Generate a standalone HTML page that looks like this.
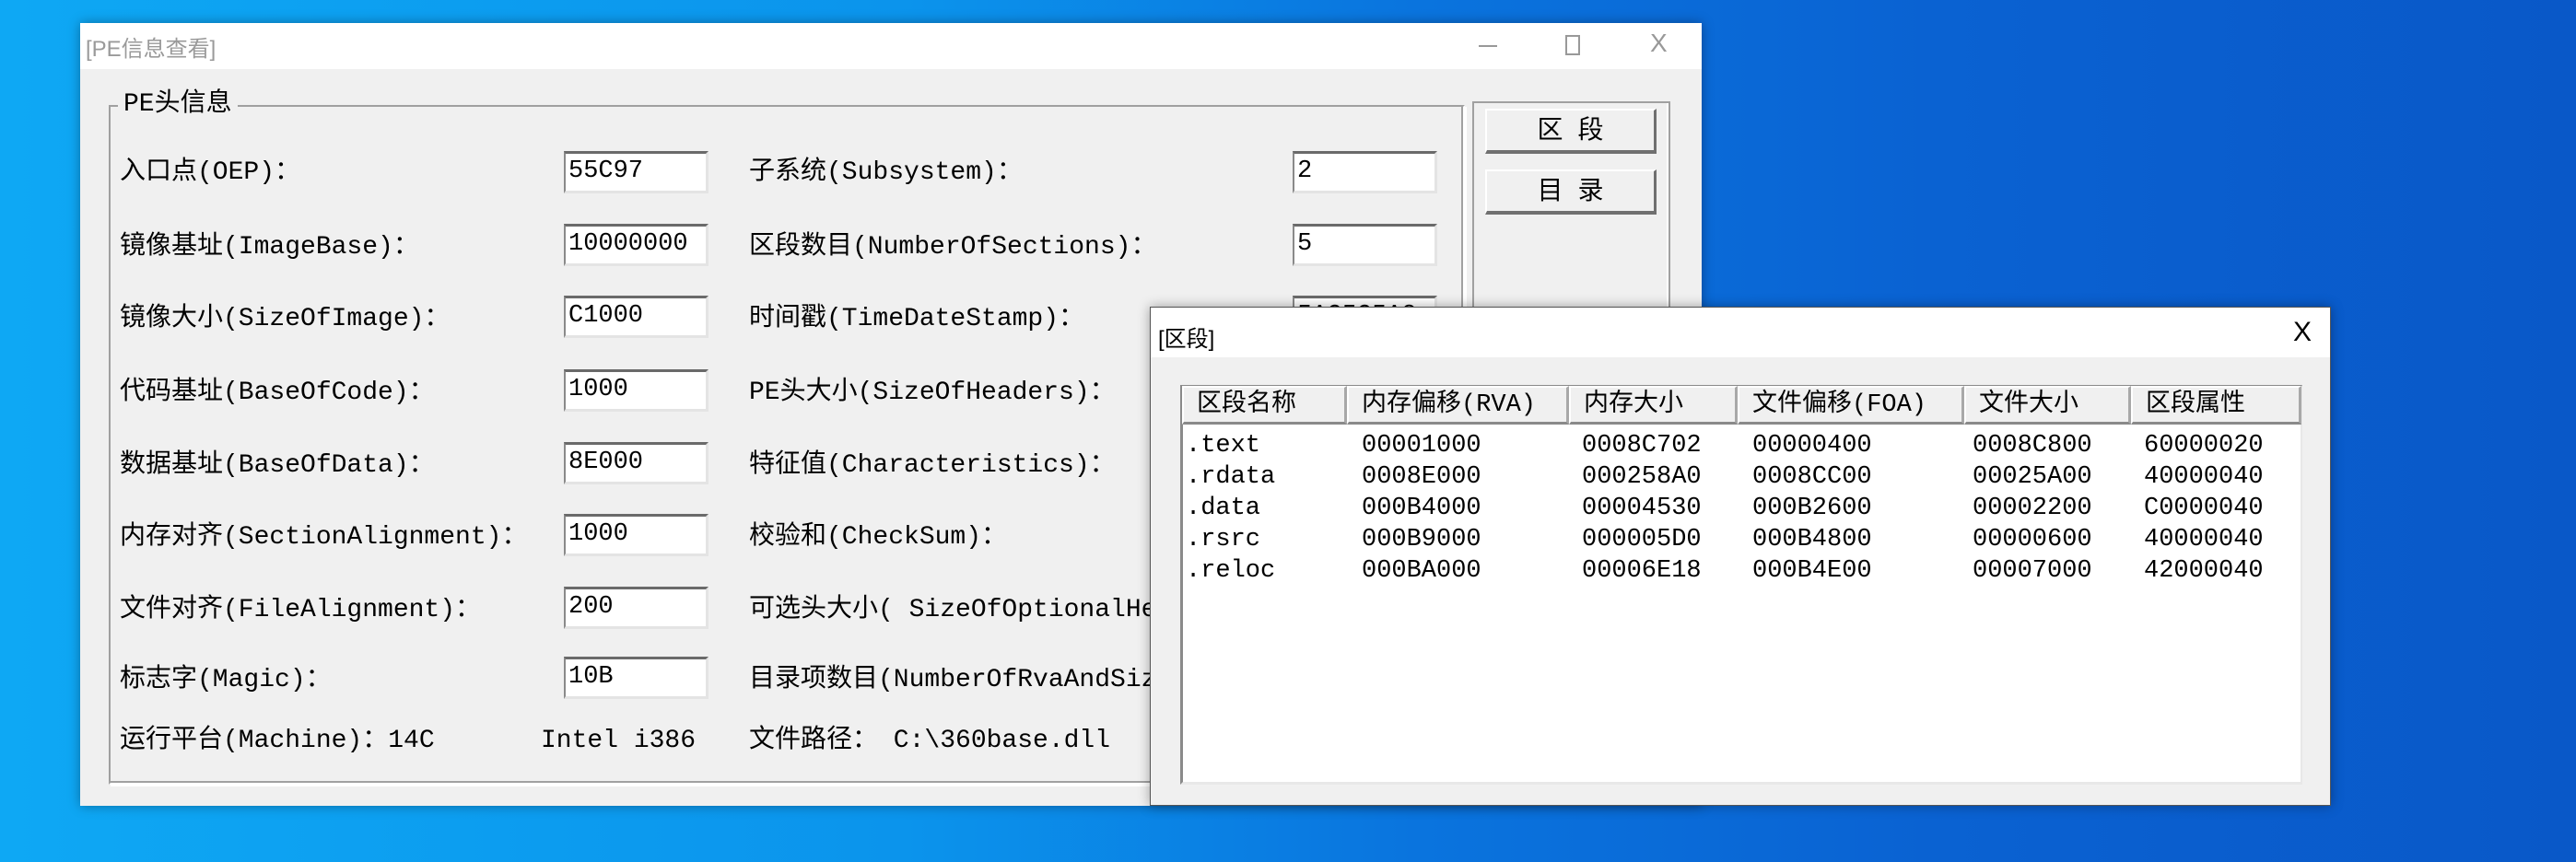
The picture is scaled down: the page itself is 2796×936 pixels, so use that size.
<!DOCTYPE html>
<html><head><meta charset="utf-8">
<style>
*{margin:0;padding:0;box-sizing:border-box}
body{width:2796px;height:936px;overflow:hidden;position:relative;
background:linear-gradient(90deg,#0ea8f4 0%,#0b94ec 35%,#0a74de 55%,#0a62d2 75%,#0958c8 100%);
font-family:"Liberation Mono","Noto Sans CJK SC",monospace;font-size:26px;color:#000}
.a{position:absolute;white-space:nowrap}
.win{position:absolute;background:#f0f0f0;box-shadow:0 0 12px rgba(0,0,0,.35)}
.tb{position:absolute;left:0;top:0;right:0;background:#fff}
.lbl{position:absolute;white-space:nowrap;line-height:30px;transform:translateY(-12px)}
.ed{position:absolute;width:157px;height:46px;background:#fff;border-top:3px solid #6a6a6a;border-left:2px solid #8a8a8a;border-right:3px solid #e4e4e4;border-bottom:3px solid #e4e4e4;padding:4px 3px 0;line-height:30px;overflow:hidden;font-size:27px}
.btn{position:absolute;left:1612px;width:186px;height:49px;background:#f0f0f0;border-top:2px solid #fff;border-left:2px solid #fff;border-right:3px solid #707070;border-bottom:4px solid #707070;text-align:center;line-height:42px;font-family:"Liberation Sans","Noto Sans CJK SC",sans-serif;font-size:28px;letter-spacing:16px;padding-left:16px}
.hd{position:absolute;top:419px;height:42px;background:#f0f0f0;border-right:3px solid #a8a8a8;border-bottom:3px solid #8a8a8a;border-top:2px solid #fff;border-left:2px solid #fff;line-height:38px;padding-left:14px;font-size:27px}
</style></head><body>

<div class="win" style="left:87px;top:25px;width:1760px;height:850px">
 <div class="tb" style="height:50px"></div>
 <div class="a" style="left:6px;top:8px;font-family:'Liberation Sans','Noto Sans CJK SC',sans-serif;font-size:24px;color:#9a9a9a">[PE信息查看]</div>
 <div class="a" style="left:1518px;top:24px;width:20px;height:2px;background:#999"></div>
 <div class="a" style="left:1612px;top:13px;width:16px;height:22px;border:2px solid #999"></div>
 <div class="a" style="left:1704px;top:6px;font-family:'Liberation Sans',sans-serif;font-size:28px;color:#999">X</div>
</div>

<div class="a" style="left:118px;top:114px;width:1472px;height:738px;border:2px solid #a0a0a0;border-right-color:#fff;border-bottom-color:#fff;box-shadow:inset -2px -2px 0 #a0a0a0, 2px 2px 0 #fff"></div>
<div class="a" style="left:128px;top:97px;background:#f0f0f0;padding:0 6px;line-height:34px;font-size:28px">PE头信息</div>

<div class="a" style="left:1598px;top:110px;width:215px;height:742px;border:2px solid #a0a0a0;box-shadow:inset -2px -2px 0 #fff"></div>
<div class="btn" style="top:118px">区段</div>
<div class="btn" style="top:184px">目录</div>

<div style="font-size:28px">
<div class="lbl" style="left:130px;top:185px">入口点(OEP)：</div>
<div class="lbl" style="left:130px;top:266px">镜像基址(ImageBase)：</div>
<div class="lbl" style="left:130px;top:344px">镜像大小(SizeOfImage)：</div>
<div class="lbl" style="left:130px;top:424px">代码基址(BaseOfCode)：</div>
<div class="lbl" style="left:130px;top:503px">数据基址(BaseOfData)：</div>
<div class="lbl" style="left:130px;top:581px">内存对齐(SectionAlignment)：</div>
<div class="lbl" style="left:130px;top:660px">文件对齐(FileAlignment)：</div>
<div class="lbl" style="left:130px;top:736px">标志字(Magic)：</div>
<div class="lbl" style="left:130px;top:802px">运行平台(Machine)：14C</div>
<div class="lbl" style="left:587px;top:802px">Intel i386</div>

<div class="lbl" style="left:813px;top:185px">子系统(Subsystem)：</div>
<div class="lbl" style="left:813px;top:266px">区段数目(NumberOfSections)：</div>
<div class="lbl" style="left:813px;top:344px">时间戳(TimeDateStamp)：</div>
<div class="lbl" style="left:813px;top:424px">PE头大小(SizeOfHeaders)：</div>
<div class="lbl" style="left:813px;top:503px">特征值(Characteristics)：</div>
<div class="lbl" style="left:813px;top:581px">校验和(CheckSum)：</div>
<div class="lbl" style="left:813px;top:660px">可选头大小( SizeOfOptionalHeader)：</div>
<div class="lbl" style="left:813px;top:736px">目录项数目(NumberOfRvaAndSizes)：</div>
<div class="lbl" style="left:813px;top:802px">文件路径： C:\360base.dll</div>
</div>

<div class="ed" style="left:612px;top:164px">55C97</div>
<div class="ed" style="left:612px;top:243px">10000000</div>
<div class="ed" style="left:612px;top:321px">C1000</div>
<div class="ed" style="left:612px;top:401px">1000</div>
<div class="ed" style="left:612px;top:480px">8E000</div>
<div class="ed" style="left:612px;top:558px">1000</div>
<div class="ed" style="left:612px;top:637px">200</div>
<div class="ed" style="left:612px;top:713px">10B</div>
<div class="ed" style="left:1403px;top:164px">2</div>
<div class="ed" style="left:1403px;top:243px">5</div>
<div class="ed" style="left:1403px;top:321px">5AC5C5A8</div>

<div class="win" style="left:1248px;top:333px;width:1282px;height:542px;z-index:5;border:1px solid #555">
 <div class="tb" style="height:54px"></div>
 <div class="a" style="left:8px;top:14px;font-family:'Liberation Sans','Noto Sans CJK SC',sans-serif;font-size:24px">[区段]</div>
 <div class="a" style="left:1240px;top:10px;font-family:'Liberation Sans',sans-serif;font-size:30px">X</div>
 <div class="a" style="left:32px;top:84px;width:1218px;height:434px;background:#fff;border-top:3px solid #8a8a8a;border-left:3px solid #8a8a8a;border-right:2px solid #e8e8e8;border-bottom:3px solid #e8e8e8"></div>
</div>
<div style="position:absolute;left:0;top:0;z-index:6;font-size:27px">
 <div class="hd" style="left:1283px;width:179px">区段名称</div>
 <div class="hd" style="left:1462px;width:241px">内存偏移(RVA)</div>
 <div class="hd" style="left:1703px;width:183px">内存大小</div>
 <div class="hd" style="left:1886px;width:246px">文件偏移(FOA)</div>
 <div class="hd" style="left:2132px;width:181px">文件大小</div>
 <div class="hd" style="left:2313px;width:185px">区段属性</div>
 <div class="a" style="left:1287px;top:467px;line-height:34px">.text<br>.rdata<br>.data<br>.rsrc<br>.reloc</div>
 <div class="a" style="left:1478px;top:467px;line-height:34px">00001000<br>0008E000<br>000B4000<br>000B9000<br>000BA000</div>
 <div class="a" style="left:1717px;top:467px;line-height:34px">0008C702<br>000258A0<br>00004530<br>000005D0<br>00006E18</div>
 <div class="a" style="left:1902px;top:467px;line-height:34px">00000400<br>0008CC00<br>000B2600<br>000B4800<br>000B4E00</div>
 <div class="a" style="left:2141px;top:467px;line-height:34px">0008C800<br>00025A00<br>00002200<br>00000600<br>00007000</div>
 <div class="a" style="left:2327px;top:467px;line-height:34px">60000020<br>40000040<br>C0000040<br>40000040<br>42000040</div>
</div>
</body></html>
